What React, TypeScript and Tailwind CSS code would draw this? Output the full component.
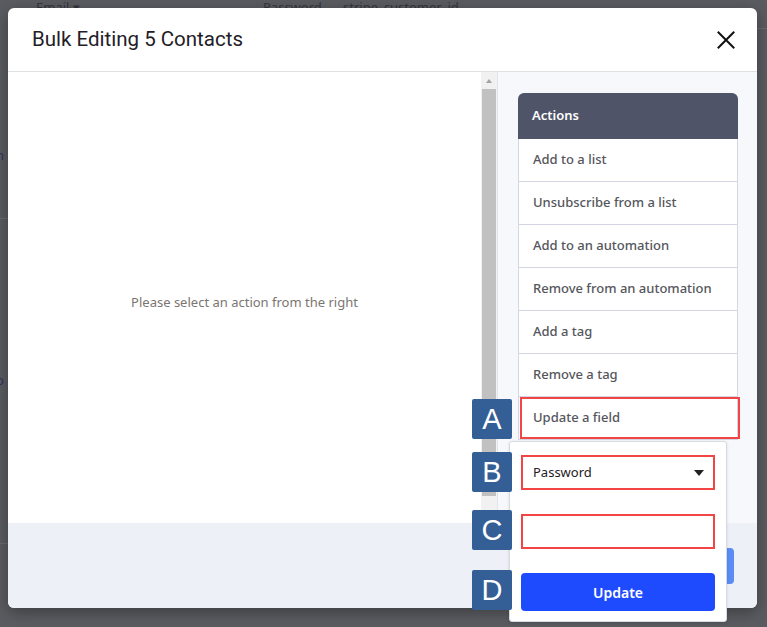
import React from "react";

const body = { fontFamily: '"Noto Sans", "Open Sans", sans-serif' };
const titleFont = { fontFamily: 'Roboto, "Noto Sans", sans-serif' };

const items = [
  "Add to a list",
  "Unsubscribe from a list",
  "Add to an automation",
  "Remove from an automation",
  "Add a tag",
  "Remove a tag",
  "Update a field",
];

function Label({ letter, className }: { letter: string; className: string }) {
  return (
    <div
      className={`w-[40px] h-[40px] rounded-[2px] bg-[#335e96] text-white flex items-center justify-center text-[29px] leading-none ${className}`}
      style={{ fontFamily: '"Liberation Sans", Arial, sans-serif' }}
    >
      {letter}
    </div>
  );
}

export default function App() {
  return (
    <div className="relative w-[767px] h-[627px] overflow-hidden bg-[#5b5c61]" style={body}>
      {/* dimmed page behind */}
      <div className="absolute inset-0 text-[13px] text-[#33353d]">
        <div className="flex h-[14px] items-end leading-none pl-[36px]">
          <span className="w-[227px]">Email ▾</span>
          <span className="w-[80px]">Password</span>
          <span>stripe_customer_id</span>
        </div>
        <div className="absolute left-[-4px] top-[146px] text-[#2c3560]">h</div>
        <div className="absolute left-[-4px] top-[371px] text-[#2c3560]">o</div>
        <div className="absolute left-0 top-[218px] w-[8px] h-px bg-[#6a6b70]" />
        <div className="absolute left-0 top-[543px] w-[8px] h-px bg-[#6a6b70]" />
        <div className="absolute right-0 top-[28px] w-[10px] h-px bg-[#6a6b70]" />
      </div>

      {/* modal */}
      <div className="absolute left-[8px] top-[8px] w-[749px] h-[600px] bg-white rounded-[6px] overflow-hidden flex flex-col shadow-[0_4px_16px_rgba(0,0,0,0.35)]">
        <div className="h-[64px] shrink-0 border-b border-[#dfe0e4] flex items-center justify-between pl-[24px] pr-[22px]">
          <div className="text-[20.5px] text-[#1f2027]" style={titleFont}>
            Bulk Editing 5 Contacts
          </div>
          <svg width="18" height="18" viewBox="0 0 18 18">
            <path d="M1.5 1.5 L16.5 16.5 M16.5 1.5 L1.5 16.5" stroke="#111" strokeWidth="2" strokeLinecap="square" />
          </svg>
        </div>
        <div className="flex-1 flex min-h-0">
          <div className="w-[473px] flex items-center justify-center">
            <div className="text-[13px] text-[#7a7672] mt-[10px]">Please select an action from the right</div>
          </div>
          <div className="w-[16px] bg-[#f1f1f1] flex flex-col items-center">
            <svg width="16" height="17" viewBox="0 0 16 17" className="shrink-0">
              <path d="M5 11 L11 11 L8 7 Z" fill="#a3a3a3" />
            </svg>
            <div className="w-[14px] h-[407px] bg-[#c1c1c1]" />
          </div>
          <div className="flex-1 bg-[#f7f8fc] border-l border-[#e3e4ea] pl-[20px] pt-[21px]">
            <div className="w-[220px]">
              <div className="h-[46px] rounded-t-[6px] bg-[#4f5468] text-white text-[13px] font-semibold flex items-center pl-[14px]">
                Actions
              </div>
              {items.map((t) => (
                <div
                  key={t}
                  className="h-[43px] bg-white border-x border-b border-[#d3d6e2] flex items-center pl-[14px] text-[13px] font-medium text-[#55565c]"
                >
                  {t}
                </div>
              ))}
            </div>
          </div>
        </div>
        <div className="h-[85px] shrink-0 bg-[#edf0f7] flex items-center justify-end pr-[23px]">
          <div className="w-[100px] h-[36px] rounded-[4px] bg-[#5a8cf6]" />
        </div>
      </div>

      {/* highlight A */}
      <div className="absolute left-[520px] top-[397px] w-[220px] h-[42px] border-2 border-[#f24545]" />

      {/* popup */}
      <div className="absolute left-[509px] top-[441px] w-[218px] h-[181px] bg-white border border-[#d8dae3] rounded-[3px] shadow-[0_1px_3px_rgba(0,0,0,0.12)] flex flex-col px-[11px] pt-[13px]">
        <div className="h-[35px] border-2 border-[#f24545] flex items-center justify-between pl-[10px] pr-[9px] text-[13px] text-[#1f2027]">
          <span>Password</span>
          <svg width="10" height="6" viewBox="0 0 10 6">
            <path d="M0 0 L10 0 L5 6 Z" fill="#222" />
          </svg>
        </div>
        <div className="h-[35px] mt-[24px] border-2 border-[#f24545]" />
        <div className="h-[38px] mt-[24px] rounded-[4px] bg-[#1f4bff] text-white text-[14px] font-semibold flex items-center justify-center">
          Update
        </div>
      </div>

      {/* labels */}
      <div className="absolute left-[472px] top-[399px] flex flex-col">
        <Label letter="A" className="" />
        <Label letter="B" className="mt-[13px]" />
        <Label letter="C" className="mt-[18px]" />
        <Label letter="D" className="mt-[20px]" />
      </div>
    </div>
  );
}
